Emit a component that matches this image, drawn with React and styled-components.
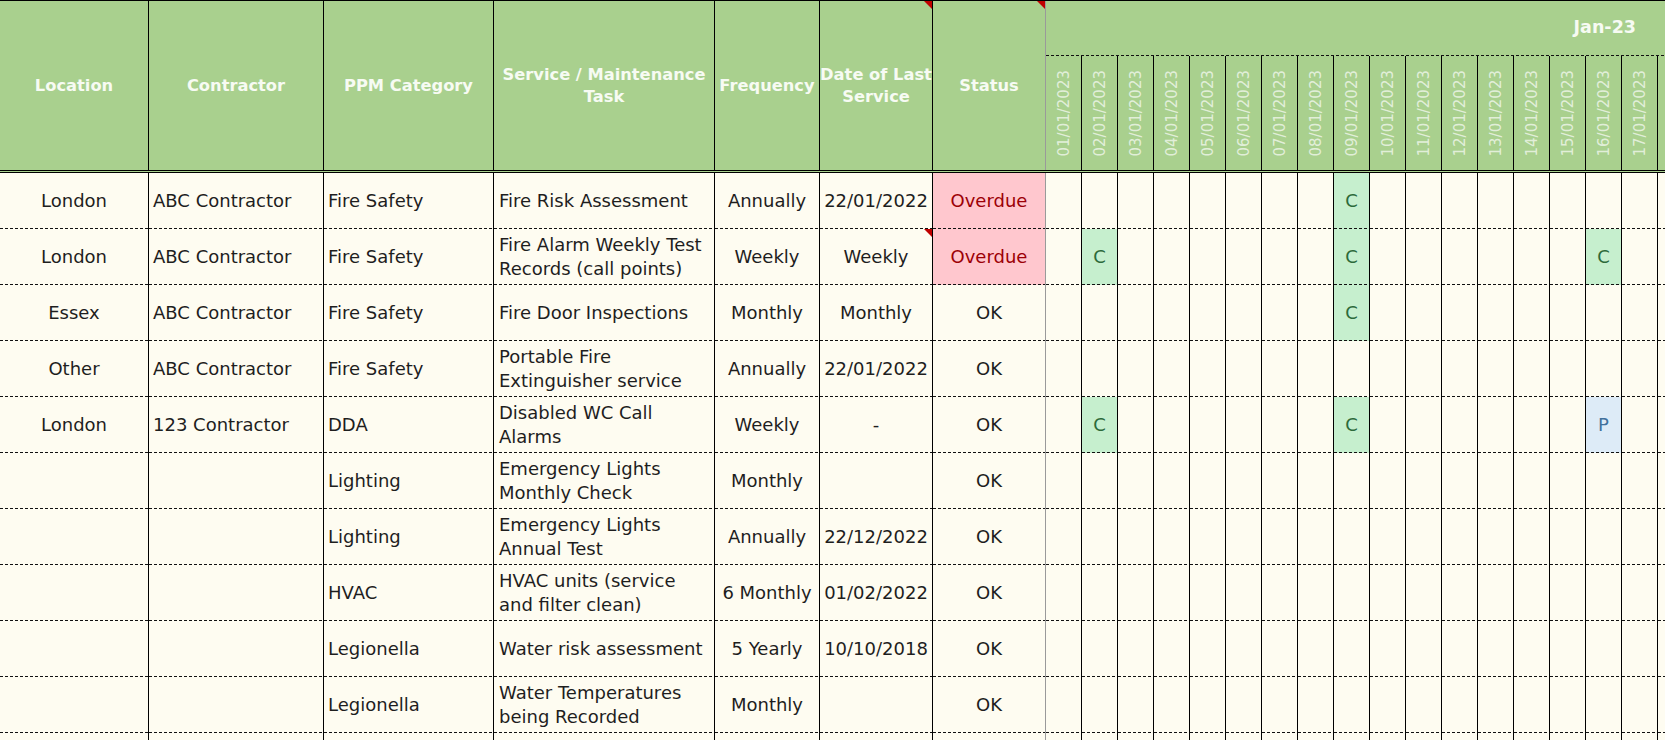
import styled, { createGlobalStyle, css } from "styled-components"

const GlobalStyle = createGlobalStyle`
    html, body {
        margin: 0;
        padding: 0;
        background: #fefcf1;
        overflow: hidden;
    }
    body {
        font-family: "DejaVu Sans", "Liberation Sans", sans-serif;
    }
`

const COLS = "149px 175px 170px 221px 105px 113px 113px repeat(18, 36px)"

const dashedBottom = css`
    background-image: repeating-linear-gradient(90deg, #111 0 3px, transparent 3px 5px);
    background-size: 100% 1px;
    background-position: left bottom;
    background-repeat: no-repeat;
`

const Sheet = styled.div`
    width: 1665px;
    height: 740px;
    overflow: hidden;
    background: #fefcf1;
`

const HeaderGrid = styled.div`
    display: grid;
    grid-template-columns: ${COLS};
    grid-template-rows: 55px 114px;
    width: max-content;
    border-top: 1px solid #000;
    border-bottom: 3px double #000;
    background: #a9d08e;
`

const HeadCell = styled.div`
    position: relative;
    grid-row: 1 / 3;
    display: flex;
    align-items: center;
    justify-content: center;
    text-align: center;
    white-space: pre;
    border-right: 1px solid ${(p) => (p.$edge ? "#9a9a9a" : "#000")};
    color: #f7fbf3;
    font-size: 16.3px;
    font-weight: bold;
    line-height: 22px;
`

const Flag = styled.span`
    position: absolute;
    top: 0;
    right: 0;
    width: 0;
    height: 0;
    border-style: solid;
    border-width: 0 8px 8px 0;
    border-color: transparent #c00000 transparent transparent;
`

const MonthCell = styled.div`
    grid-column: 8 / -1;
    display: flex;
    align-items: center;
    justify-content: flex-end;
    padding: 0 58px 4px 0;
    color: #f7fbf3;
    font-size: 17.5px;
    font-weight: bold;
    ${dashedBottom}
`

const DayHead = styled.div`
    display: flex;
    align-items: center;
    justify-content: center;
    border-right: 1px solid #000;
`

const DayLabel = styled.span`
    writing-mode: vertical-rl;
    transform: rotate(180deg);
    font-size: 15px;
    color: rgba(255, 255, 255, 0.68);
    white-space: nowrap;
`

const Row = styled.div`
    display: grid;
    grid-template-columns: ${COLS};
    height: 56px;
    width: max-content;
`

const Cell = styled.div`
    position: relative;
    display: flex;
    align-items: center;
    justify-content: ${(p) => p.$align || "center"};
    text-align: ${(p) => (p.$align === "flex-start" ? "left" : "center")};
    padding: 0 ${(p) => (p.$pad ? p.$pad : 0)}px;
    white-space: pre-line;
    border-right: 1px solid ${(p) => (p.$edge ? "#9a9a9a" : "#000")};
    background-color: ${(p) => p.$bg || "transparent"};
    color: ${(p) => p.$color || "#1e1e1e"};
    font-size: 18px;
    line-height: 24px;
    ${dashedBottom}
`

const MARKS = {
    C: { bg: "#c6efce", color: "#2d6a3a" },
    P: { bg: "#ddebf7", color: "#41719c" },
}

const dates = Array.from({ length: 18 }, (_, i) =>
    `${String(i + 1).padStart(2, "0")}/01/2023`
)

const rows = [
    { loc: "London", con: "ABC Contractor", cat: "Fire Safety", task: "Fire Risk Assessment", freq: "Annually", last: "22/01/2022", status: "Overdue", days: { 8: "C" } },
    { loc: "London", con: "ABC Contractor", cat: "Fire Safety", task: "Fire Alarm Weekly Test\nRecords (call points)", freq: "Weekly", last: "Weekly", flag: true, status: "Overdue", days: { 1: "C", 8: "C", 15: "C" } },
    { loc: "Essex", con: "ABC Contractor", cat: "Fire Safety", task: "Fire Door Inspections", freq: "Monthly", last: "Monthly", status: "OK", days: { 8: "C" } },
    { loc: "Other", con: "ABC Contractor", cat: "Fire Safety", task: "Portable Fire\nExtinguisher service", freq: "Annually", last: "22/01/2022", status: "OK" },
    { loc: "London", con: "123 Contractor", cat: "DDA", task: "Disabled WC Call\nAlarms", freq: "Weekly", last: "-", status: "OK", days: { 1: "C", 8: "C", 15: "P" } },
    { cat: "Lighting", task: "Emergency Lights\nMonthly Check", freq: "Monthly", status: "OK" },
    { cat: "Lighting", task: "Emergency Lights\nAnnual Test", freq: "Annually", last: "22/12/2022", status: "OK" },
    { cat: "HVAC", task: "HVAC units (service\nand filter clean)", freq: "6 Monthly", last: "01/02/2022", status: "OK" },
    { cat: "Legionella", task: "Water risk assessment", freq: "5 Yearly", last: "10/10/2018", status: "OK" },
    { cat: "Legionella", task: "Water Temperatures\nbeing Recorded", freq: "Monthly", status: "OK" },
    {},
]

const TaskRow = ({ row }) => {
    const overdue = row.status === "Overdue"
    const days = row.days || {}
    return (
        <Row>
            <Cell>{row.loc}</Cell>
            <Cell $align="flex-start" $pad={4}>{row.con}</Cell>
            <Cell $align="flex-start" $pad={4}>{row.cat}</Cell>
            <Cell $align="flex-start" $pad={5}>{row.task}</Cell>
            <Cell>{row.freq}</Cell>
            <Cell>
                {row.last}
                {row.flag && <Flag />}
            </Cell>
            <Cell
                $edge
                $bg={overdue ? "#ffc7ce" : undefined}
                $color={overdue ? "#9c0006" : undefined}
            >
                {row.status}
            </Cell>
            {dates.map((d, i) => {
                const mark = days[i]
                return (
                    <Cell
                        key={d}
                        $bg={mark ? MARKS[mark].bg : undefined}
                        $color={mark ? MARKS[mark].color : undefined}
                    >
                        {mark}
                    </Cell>
                )
            })}
        </Row>
    )
}

export default function App() {
    return (
        <Sheet>
            <GlobalStyle />
            <HeaderGrid>
                <HeadCell>Location</HeadCell>
                <HeadCell>Contractor</HeadCell>
                <HeadCell>PPM Category</HeadCell>
                <HeadCell>{"Service / Maintenance\nTask"}</HeadCell>
                <HeadCell>Frequency</HeadCell>
                <HeadCell>
                    {"Date of Last\nService"}
                    <Flag />
                </HeadCell>
                <HeadCell $edge>
                    Status
                    <Flag />
                </HeadCell>
                <MonthCell>Jan-23</MonthCell>
                {dates.map((d, i) => (
                    <DayHead key={d}>
                        {/* the 18th column is cut by the window edge, its label falls outside */}
                        {i < 17 && <DayLabel>{d}</DayLabel>}
                    </DayHead>
                ))}
            </HeaderGrid>
            {rows.map((row, i) => (
                <TaskRow key={i} row={row} />
            ))}
        </Sheet>
    )
}
